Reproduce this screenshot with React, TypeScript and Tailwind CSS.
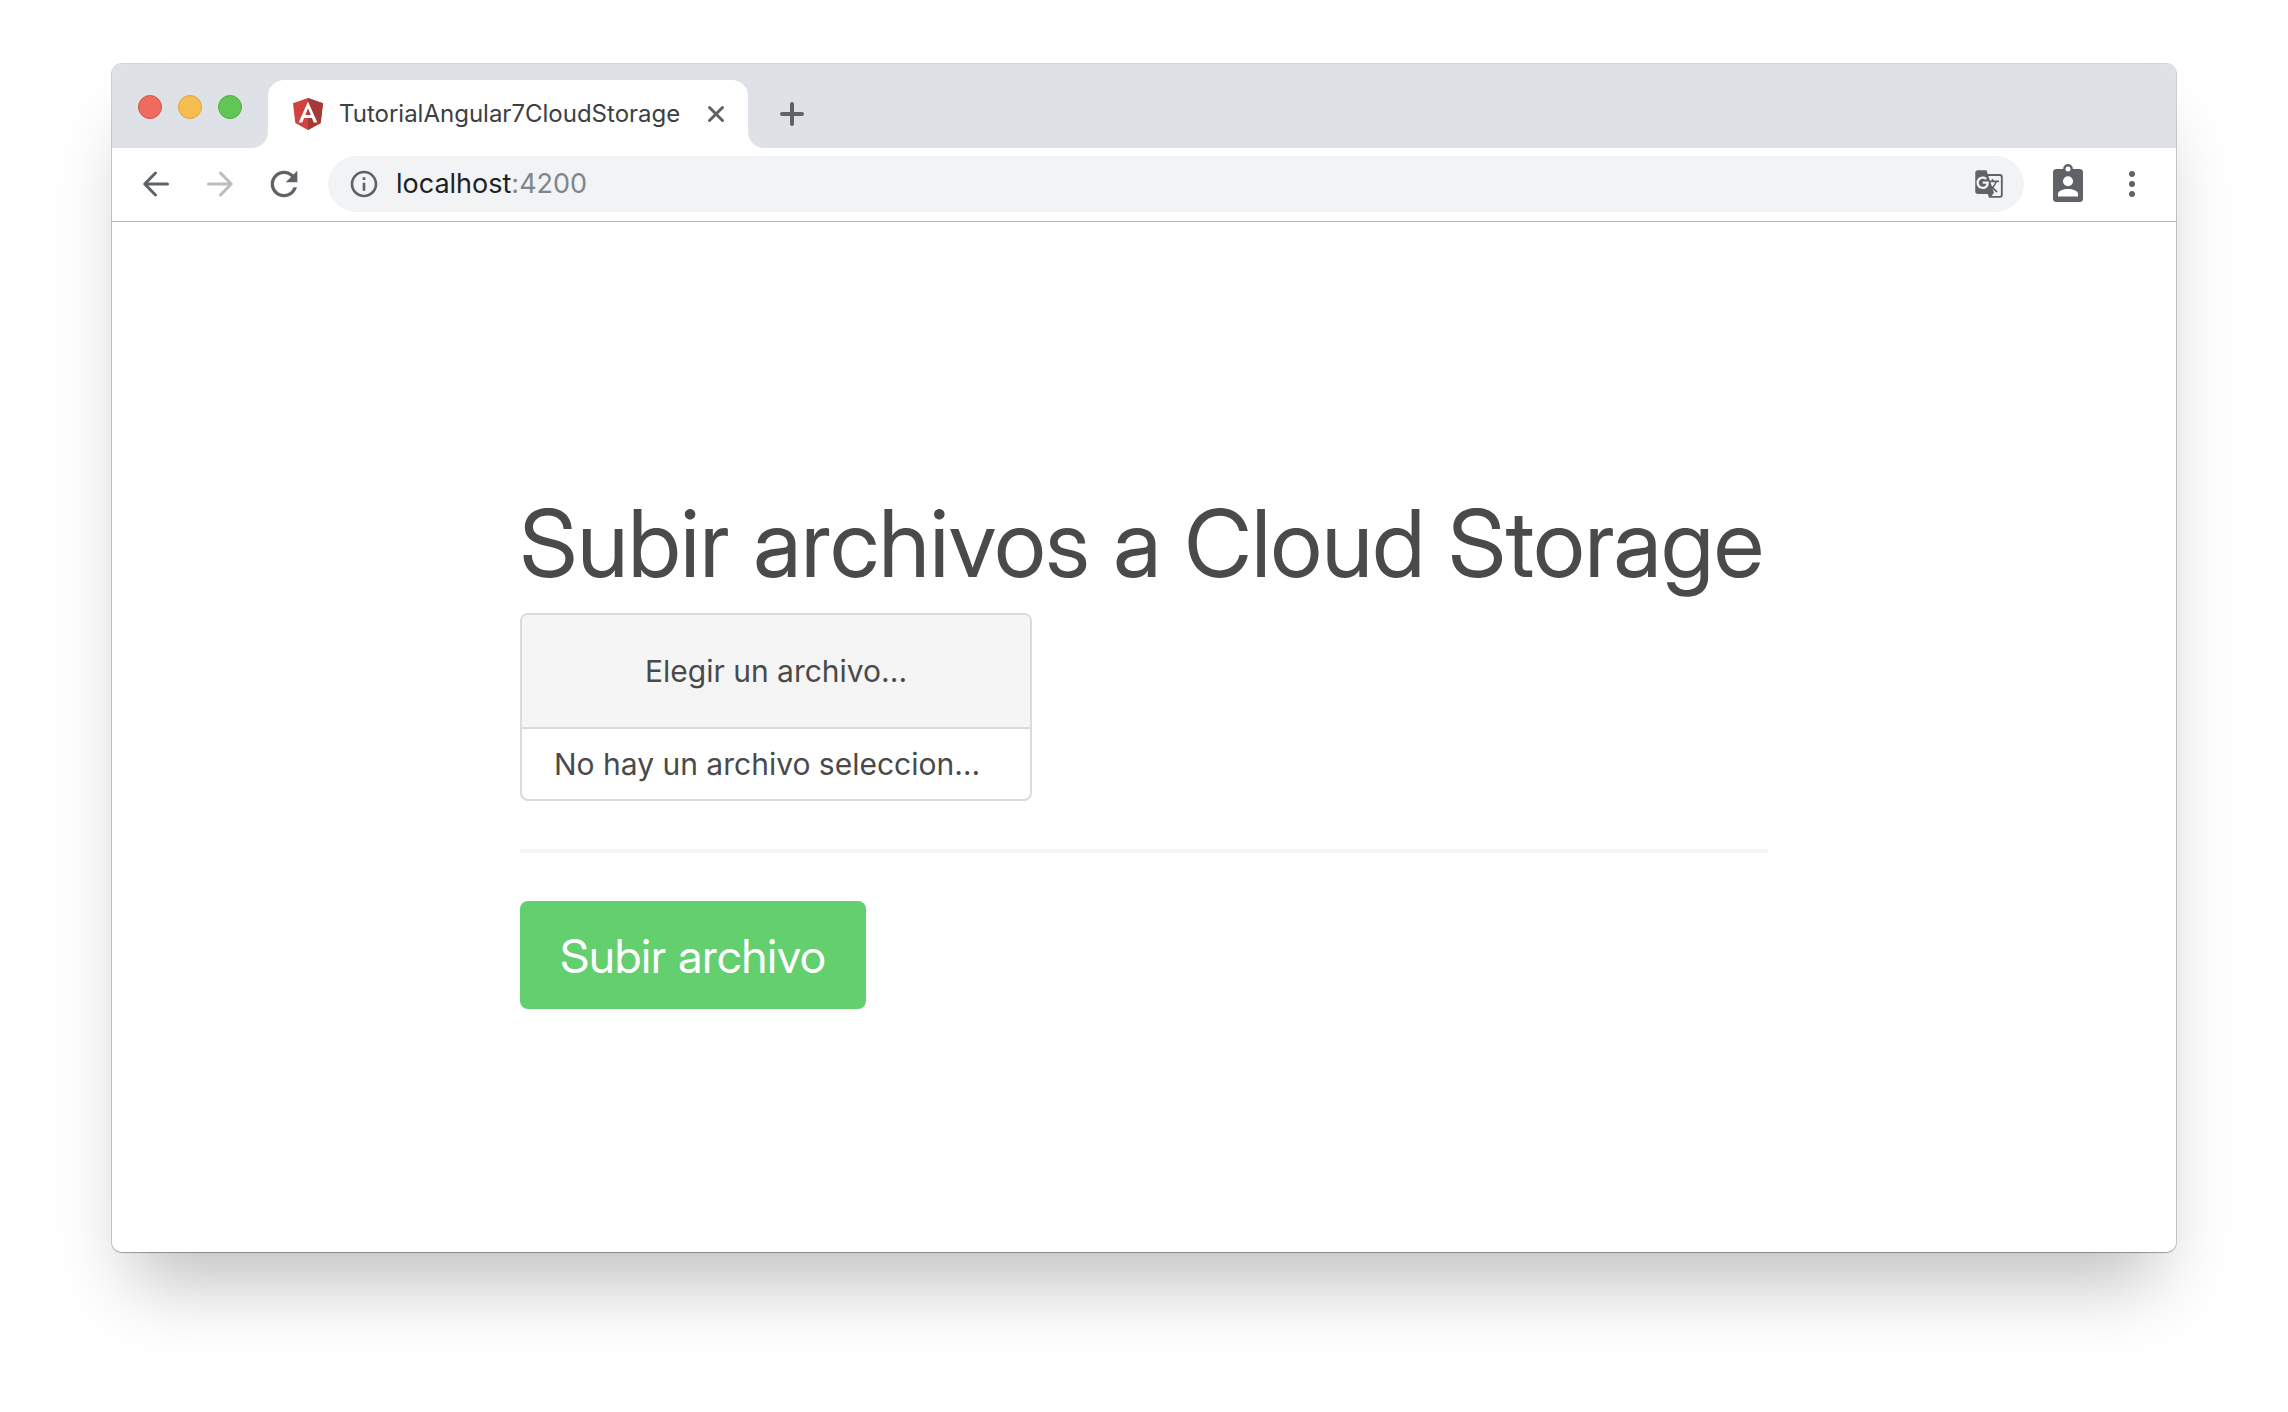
import { useState } from "react";
import { MdGTranslate, MdInfoOutline, MdRefresh } from "react-icons/md";

function AngularLogo() {
  return (
    <svg viewBox="0 0 30 32" className="h-8 w-[30px] shrink-0" aria-hidden="true">
      <path d="M15 0 0 5.3l2.3 19.6L15 32l12.7-7.1L30 5.3z" fill="#d2413f" />
      <path d="M15 0v32l12.7-7.1L30 5.3z" fill="#a63936" />
      <path
        d="M15 3.6 5.7 24.6h3.5l1.9-4.7h7.8l1.9 4.7h3.5zm0 6.7 2.8 6.7h-5.6z"
        fill="#fff"
        fillRule="evenodd"
      />
    </svg>
  );
}

function ArrowIcon({ back = false }: { back?: boolean }) {
  return (
    <svg viewBox="0 0 28 28" className="size-7" fill="none" stroke="currentColor" strokeWidth="3" strokeLinecap="round" strokeLinejoin="round" aria-hidden="true">
      {back ? <path d="M25.500 14H3M13.500 3 2.700 14l10.800 11" /> : <path d="M2.500 14H25M14.500 3l10.800 11-10.800 11" />}
    </svg>
  );
}

function BadgeIcon() {
  return (
    <svg viewBox="0 0 30 38" className="h-[38px] w-[30px]" aria-hidden="true">
      <rect y="5" width="30" height="33" rx="3.500" fill="#5f6368" />
      <circle cx="15" cy="5" r="3.700" fill="#fff" stroke="#5f6368" strokeWidth="2.400" />
      <circle cx="15" cy="17.300" r="5" fill="#fff" />
      <path d="M5 32.500V30c0-3.300 5.500-5 10-5s10 1.700 10 5v2.500z" fill="#fff" />
    </svg>
  );
}

function TabStrip() {
  return (
    <div className="flex h-[84px] items-end bg-[#dee1e6]">
      <div className="flex w-[156px] gap-4 pb-[29px] pl-[26px]">
        <button aria-label="Cerrar ventana" className="size-6 rounded-full border border-[#d9534a] bg-[#ee6b60]" />
        <button aria-label="Minimizar" className="size-6 rounded-full border border-[#dfa33f] bg-[#f6be4f]" />
        <button aria-label="Maximizar" className="size-6 rounded-full border border-[#4fac42] bg-[#62c655]" />
      </div>
      <div className="relative flex h-17 w-[480px] items-center rounded-t-2xl bg-white pl-[25px]">
        <svg viewBox="0 0 16 16" className="absolute bottom-0 -left-4 size-4" aria-hidden="true">
          <path d="M16 0v16H0A16 16 0 0 0 16 0z" fill="#fff" />
        </svg>
        <svg viewBox="0 0 16 16" className="absolute -right-4 bottom-0 size-4" aria-hidden="true">
          <path d="M0 0v16h16A16 16 0 0 1 0 0z" fill="#fff" />
        </svg>
        <AngularLogo />
        <span className="ml-4 w-[357px] whitespace-nowrap text-2xl text-[#3c4043]">TutorialAngular7CloudStorage</span>
        <button aria-label="Cerrar pestaña" className="flex size-10 items-center justify-center">
          <svg viewBox="0 0 18 18" className="size-[18px]" stroke="#5f6368" strokeWidth="3" strokeLinecap="round" aria-hidden="true">
            <path d="M2.500 2.500l13 13M15.500 2.500l-13 13" />
          </svg>
        </button>
      </div>
      <button aria-label="Nueva pestaña" className="mb-3.5 ml-6 flex size-10 items-center justify-center">
        <svg viewBox="0 0 24 24" className="size-6" stroke="#5f6368" strokeWidth="4" strokeLinecap="round" aria-hidden="true">
          <path d="M12 2v20M2 12h20" />
        </svg>
      </button>
    </div>
  );
}

function Toolbar() {
  return (
    <div className="flex h-[74px] items-center border-b border-[#b3b4b6] bg-white pr-9 pb-px pl-[30px] text-[#5f6368]">
      <button aria-label="Atrás">
        <ArrowIcon back />
      </button>
      <button aria-label="Adelante" className="ml-9 text-[#bcbdc0]">
        <ArrowIcon />
      </button>
      <button aria-label="Recargar" className="ml-[30px]">
        <MdRefresh className="size-10" />
      </button>
      <div className="mr-[29px] ml-6 flex h-14 flex-1 items-center rounded-full bg-[#f1f3f4] px-5">
        <MdInfoOutline className="size-8" />
        <label className="relative ml-4 flex flex-1 items-center text-[27px] leading-8">
          <span className="whitespace-pre text-[#202124]">
            localhost<span className="text-[#80868b]">:4200</span>
          </span>
          <input
            aria-label="Dirección"
            defaultValue="localhost:4200"
            className="absolute inset-0 w-full bg-transparent text-transparent outline-none"
          />
        </label>
        <button aria-label="Traducir esta página">
          <MdGTranslate className="size-[30px]" />
        </button>
      </div>
      <button aria-label="Perfil" className="pb-0.5">
        <BadgeIcon />
      </button>
      <button aria-label="Menú" className="ml-[41px] flex w-4 flex-col items-center gap-1">
        <span className="size-1.5 rounded-full bg-[#5f6368]" />
        <span className="size-1.5 rounded-full bg-[#5f6368]" />
        <span className="size-1.5 rounded-full bg-[#5f6368]" />
      </button>
    </div>
  );
}

function UploadForm() {
  const [fileName, setFileName] = useState("No hay un archivo seleccionado");
  return (
    <form className="w-full max-w-[1248px] text-[#4a4a4a]" onSubmit={(e) => e.preventDefault()}>
      <h1 className="mb-4 whitespace-nowrap font-['Inter_Display','Inter',sans-serif] text-[93px] leading-[108px]">
        Subir archivos a Cloud Storage
      </h1>
      <label className="block w-[512px] cursor-pointer overflow-hidden rounded-lg border-2 border-[#dbdbdb] text-[30px]">
        <input
          type="file"
          className="sr-only"
          onChange={(e) => setFileName(e.target.files?.[0]?.name ?? "No hay un archivo seleccionado")}
        />
        <span className="flex h-[114px] items-center justify-center border-b-2 border-[#dbdbdb] bg-[#f5f5f5]">
          Elegir un archivo...
        </span>
        <span className="block truncate pr-12 pl-8 leading-[70px]">{fileName}</span>
      </label>
      <hr className="my-12 h-1 border-0 bg-[#f5f5f5]" />
      <button
        type="submit"
        className="h-27 w-[346px] rounded-lg bg-[#64cf6f] pt-0.5 font-['Inter_Display','Inter',sans-serif] text-[47px] text-white"
      >
        Subir archivo
      </button>
    </form>
  );
}

export default function App() {
  return (
    <div className="flex min-h-screen flex-col bg-white px-28 pt-16 pb-40 font-['Inter',sans-serif]">
      <div className="flex flex-1 flex-col overflow-hidden rounded-[10px] bg-white shadow-[0_0_0_1px_rgba(0,0,0,0.17),0_1px_1px_rgba(0,0,0,0.2),0_50px_70px_-20px_rgba(0,0,0,0.25)]">
        <TabStrip />
        <Toolbar />
        <main className="flex flex-1 items-center justify-center bg-white pt-6">
          <UploadForm />
        </main>
      </div>
    </div>
  );
}
